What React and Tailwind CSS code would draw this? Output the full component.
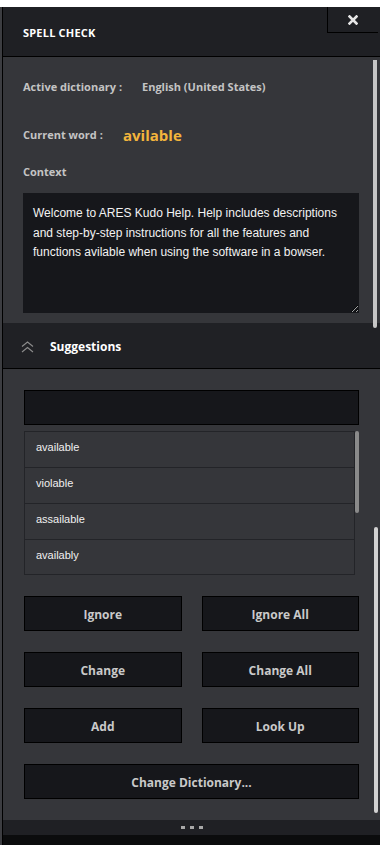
import { useState } from 'react'

const suggestions = ['available', 'violable', 'assailable', 'availably']
const rowHeights = ['h-[35px]', 'h-[36px]', 'h-[36px]', 'h-[35px]']

function ActionButton({ label, className = '' }) {
  return (
    <button className={`h-[35px] pt-[3px] bg-[#16171b] border border-black text-[12px] font-bold text-[#c9c9c9] ${className}`}>
      {label}
    </button>
  )
}

function App() {
  const [selected, setSelected] = useState(null)
  const context =
    'Welcome to ARES Kudo Help. Help includes descriptions and step-by-step instructions for all the features and functions avilable when using the software in a bowser.'

  return (
    <div className="min-h-screen bg-white pt-[7px]" style={{ fontFamily: '"Open Sans", "Liberation Sans", sans-serif' }}>
      <div className="relative w-[380px] bg-[#3c3d41] pl-[2px]">
        <div className="border-l border-black">
          {/* header */}
          <div className="flex h-[50px] bg-[#1f2024] border-b border-black">
            <div className="flex-1 flex items-center pl-[20px] pt-[4px] text-[11px] font-bold text-white tracking-[0.2px]">
              SPELL CHECK
            </div>
            <button className="self-start w-[51px] h-[26px] mr-[2px] flex items-center justify-center border-l border-b border-black">
              <svg width="10" height="10" viewBox="0 0 10 10">
                <path d="M1.5 1.5 L8.5 8.5 M8.5 1.5 L1.5 8.5" stroke="#e6e6e6" strokeWidth="2.6" strokeLinecap="square" />
              </svg>
            </button>
          </div>

          {/* info section */}
          <div className="bg-[#35363a] pl-[20px] pr-[20px] pt-[22px] pb-[10px]">
            <div className="h-[16px] flex items-center text-[11px] font-bold text-[#c4c4c4]">
              <span className="w-[119px]">Active dictionary :</span>
              <span>English (United States)</span>
            </div>
            <div className="h-[20px] mt-[30px] flex items-center">
              <span className="w-[100px] text-[11px] font-bold text-[#c4c4c4]">Current word :</span>
              <span className="text-[15px] font-bold text-[#f3b53c]">avilable</span>
            </div>
            <div className="mt-[19px] h-[16px] flex items-center text-[11px] font-bold text-[#c4c4c4]">Context</div>
            <textarea
              readOnly
              value={context}
              className="mt-[13px] block w-[336px] h-[120px] bg-[#16171b] text-[#f2f2f2] text-[12px] leading-[19.5px] pl-[10px] pr-[8px] pt-[11px] outline-none"
              style={{ fontFamily: '"Liberation Sans", Arial, sans-serif' }}
            />
          </div>

          {/* suggestions header */}
          <div className="h-[46px] bg-[#202125] border-b border-black flex items-center pl-[18px] pt-[3px]">
            <svg width="13" height="12" viewBox="0 0 13 12" fill="none">
              <path d="M1 5.5 L6.5 1 L12 5.5 M1 11 L6.5 6.5 L12 11" stroke="#8c8c8c" strokeWidth="1.1" />
            </svg>
            <span className="ml-[16px] text-[12px] font-bold text-white">Suggestions</span>
          </div>

          {/* suggestions body */}
          <div className="bg-[#35363a] px-[21px] pt-[21px] pb-[21px]">
            <input className="block w-full h-[35px] bg-[#16171b] border border-black outline-none" />
            <div className="mt-[6px] flex">
              <div className="flex-1 border border-[#232428]" style={{ fontFamily: '"Liberation Sans", Arial, sans-serif' }}>
                {suggestions.map((s, i) => (
                  <div
                    key={s}
                    onClick={() => setSelected(i)}
                    className={`${rowHeights[i]} flex items-center pl-[11px] pb-[4px] text-[11px] text-[#f0f0f0] ${i > 0 ? 'border-t border-[#232428]' : ''} ${selected === i ? 'bg-[#44454a]' : ''}`}
                  >
                    {s}
                  </div>
                ))}
              </div>
              <div className="w-[4px]">
                <div className="h-[82px] rounded-sm bg-[#8a8a8a]" />
              </div>
            </div>

            <div className="mt-[21px] grid grid-cols-2 gap-x-[20px] gap-y-[21px]">
              <ActionButton label="Ignore" />
              <ActionButton label="Ignore All" />
              <ActionButton label="Change" />
              <ActionButton label="Change All" />
              <ActionButton label="Add" />
              <ActionButton label="Look Up" />
              <ActionButton label="Change Dictionary..." className="col-span-2" />
            </div>
          </div>

          {/* footer */}
          <div className="h-[15px] bg-[#1f2024] flex items-center justify-center gap-[5px]">
            <span className="w-[4px] h-[3px] bg-[#a8a8a8]" />
            <span className="w-[4px] h-[3px] bg-[#a8a8a8]" />
            <span className="w-[4px] h-[3px] bg-[#a8a8a8]" />
          </div>
          <div className="h-[12px] bg-[#0b0c0d]" />
        </div>

        {/* overlay scrollbars */}
        <div className="absolute left-[373px] top-[53px] w-[4px] h-[268px] bg-[#c6c6c6] rounded-b-sm" />
        <div className="absolute left-[374px] top-[520px] w-[4px] h-[286px] bg-[#d2d2d2] rounded-sm" />
      </div>
    </div>
  )
}

export default App
